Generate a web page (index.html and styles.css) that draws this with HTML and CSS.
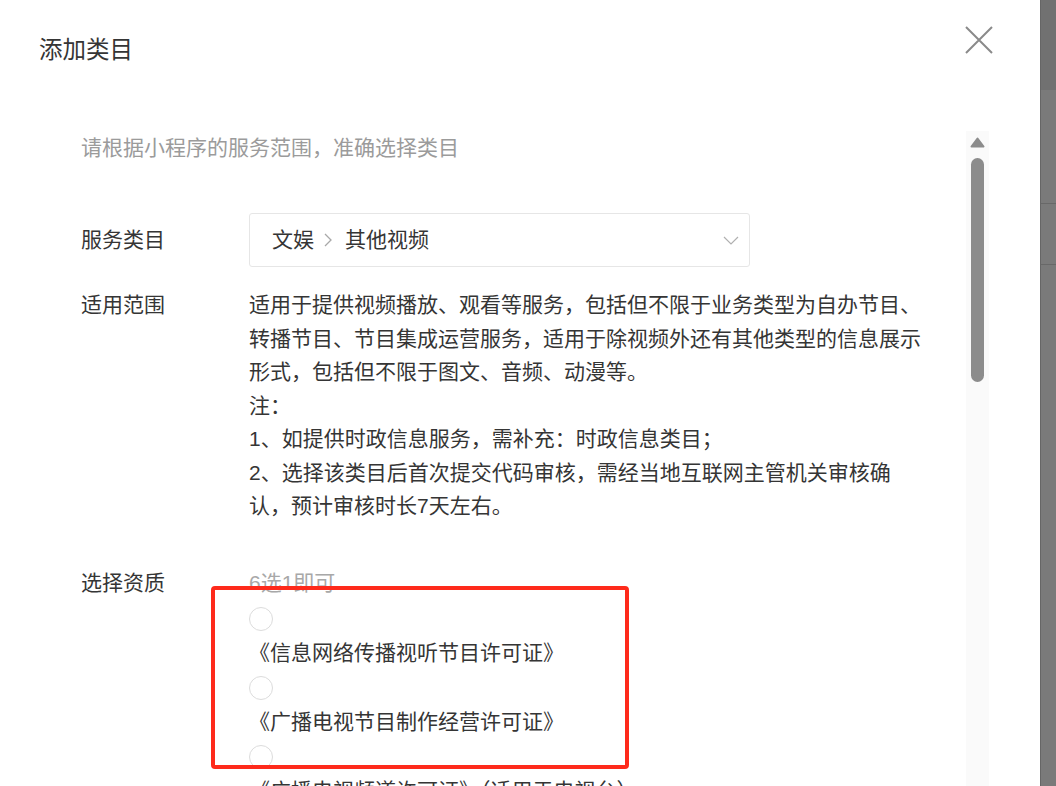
FILE: index.html
```html
<!DOCTYPE html>
<html lang="zh-CN">
<head>
    <meta charset="UTF-8">
    <meta name="viewport" content="width=device-width, initial-scale=1.0">
    <title>添加类目</title>
    <link rel="stylesheet" href="styles.css">
</head>
<body>
    <div class="page">
        <div class="dialog">
            <div class="dialog-hd">
                <h3 class="dialog-title">添加类目</h3>
                <button class="dialog-close" aria-label="关闭">
                    <svg width="28" height="28" viewBox="0 0 28 28">
                        <path d="M1 1L27 27M27 1L1 27" stroke="#8a8a8a" stroke-width="2" fill="none"/>
                    </svg>
                </button>
            </div>
            <div class="dialog-bd">
                <div class="scroll-content">
                    <p class="tips">请根据小程序的服务范围，准确选择类目</p>

                    <div class="form-row form-row-select">
                        <div class="form-label">服务类目</div>
                        <div class="form-field">
                            <div class="select">
                                <span class="select-value">
                                    文娱
                                    <svg class="select-sep" width="8" height="14" viewBox="0 0 8 14">
                                        <path d="M1 1L7 7L1 13" stroke="#a8a8a8" stroke-width="1.3" fill="none"/>
                                    </svg>
                                    其他视频
                                </span>
                                <svg class="select-arrow" width="16" height="9" viewBox="0 0 16 9">
                                    <path d="M1 1L8 8L15 1" stroke="#b0b0b0" stroke-width="1.2" fill="none"/>
                                </svg>
                            </div>
                        </div>
                    </div>

                    <div class="form-row form-row-desc">
                        <div class="form-label">适用范围</div>
                        <div class="form-field desc">
                            适用于提供视频播放、观看等服务，包括但不限于业务类型为自办节目、转播节目、节目集成运营服务，适用于除视频外还有其他类型的信息展示形式，包括但不限于图文、音频、动漫等。<br>
                            注：<br>
                            1、如提供时政信息服务，需补充：时政信息类目；<br>
                            2、选择该类目后首次提交代码审核，需经当地互联网主管机关审核确认，预计审核时长7天左右。
                        </div>
                    </div>

                    <div class="form-row form-row-cert">
                        <div class="form-label">选择资质</div>
                        <div class="form-field">
                            <div class="cert-tips">6选1即可</div>
                            <label class="radio-item">
                                <span class="radio"></span>
                                <span class="radio-text">《信息网络传播视听节目许可证》</span>
                            </label>
                            <label class="radio-item">
                                <span class="radio"></span>
                                <span class="radio-text">《广播电视节目制作经营许可证》</span>
                            </label>
                            <label class="radio-item">
                                <span class="radio"></span>
                                <span class="radio-text">《广播电视频道许可证》（适用于电视台）</span>
                            </label>
                        </div>
                    </div>
                </div>
                <div class="scrollbar">
                    <svg class="scrollbar-up" width="15" height="11" viewBox="0 0 15 11">
                        <path d="M7.5 1.5L13.5 9.5H1.5Z" fill="#8c8c8c" stroke="#8c8c8c" stroke-width="2" stroke-linejoin="round"/>
                    </svg>
                    <div class="scrollbar-thumb"></div>
                </div>
            </div>
        </div>
        <div class="backdrop">
            <div class="backdrop-top"></div>
            <div class="backdrop-row"></div>
            <div class="backdrop-row backdrop-row-sm"></div>
        </div>
    </div>
    <div class="mark-box"></div>
</body>
</html>
```

FILE: styles.css
```css
body {
    margin: 0;
    padding: 0;
    font-family: "Liberation Sans", "Noto Sans CJK SC", sans-serif;
    color: #353535;
    background: #7a7a7a;
    overflow: hidden;
}
.page {
    display: flex;
    height: 786px;
}
.dialog {
    width: 1041px;
    background: #fff;
    display: flex;
    flex-direction: column;
}
.dialog-hd {
    height: 131px;
    display: flex;
    justify-content: space-between;
    align-items: flex-start;
    padding: 0 47px 0 39px;
    box-sizing: border-box;
}
.dialog-title {
    margin: 38px 0 0;
    font-size: 23.5px;
    line-height: 24px;
    font-weight: normal;
}
.dialog-close {
    margin-top: 26px;
    padding: 0;
    border: none;
    background: none;
    width: 28px;
    height: 28px;
    cursor: pointer;
}
.dialog-close svg {
    display: block;
}
.dialog-bd {
    flex: 1;
    min-height: 0;
    display: flex;
    overflow: hidden;
}
.scroll-content {
    width: 966px;
    flex-shrink: 0;
    padding-left: 81px;
    box-sizing: border-box;
    font-size: 21px;
}
.tips {
    margin: 0;
    line-height: 34px;
    color: #9b9b9b;
}
.form-row {
    display: flex;
}
.form-label {
    width: 168px;
    flex-shrink: 0;
    line-height: 34px;
}
.form-field {
    width: 676px;
}
.form-row-select {
    margin-top: 48px;
    align-items: center;
}
.select {
    width: 501px;
    height: 54px;
    box-sizing: border-box;
    border: 1px solid #e6e6e6;
    border-radius: 3px;
    display: flex;
    align-items: center;
    justify-content: space-between;
    padding: 0 10px 0 22px;
}
.select-value {
    display: flex;
    align-items: center;
    line-height: 34px;
}
.select-sep {
    margin: 0 13px 0 10px;
}
.form-row-desc {
    margin-top: 21px;
}
.desc {
    line-height: 33.5px;
}
.form-row-cert {
    margin-top: 43.5px;
}
.cert-tips {
    line-height: 34px;
    color: #a8a8a8;
}
.radio-item {
    display: block;
    margin-top: 7px;
}
.radio-item + .radio-item {
    margin-top: 6px;
}
.radio {
    display: block;
    width: 24px;
    height: 24px;
    box-sizing: border-box;
    border: 1px solid #dcdcdc;
    border-radius: 50%;
}
.radio-text {
    display: block;
    margin-top: 5px;
    line-height: 34px;
}
.scrollbar {
    width: 23px;
    flex-shrink: 0;
    background: #fafafa;
    display: flex;
    flex-direction: column;
    align-items: center;
    padding-top: 6px;
}
.scrollbar-up {
    display: block;
}
.scrollbar-thumb {
    margin-top: 10px;
    width: 13px;
    height: 224px;
    border-radius: 7px;
    background: #8c8c8c;
}
.backdrop {
    width: 15px;
    border-left: 1px solid #666;
    background: #7a7a7a;
}
.backdrop-top {
    height: 90px;
    background: #717171;
}
.backdrop-row {
    height: 113px;
    border-bottom: 1px solid #686868;
}
.backdrop-row-sm {
    height: 60px;
}
.mark-box {
    position: absolute;
    left: 211px;
    top: 586px;
    width: 418px;
    height: 183px;
    box-sizing: border-box;
    border: 4px solid #fe2a1b;
    border-radius: 4px;
}
```
